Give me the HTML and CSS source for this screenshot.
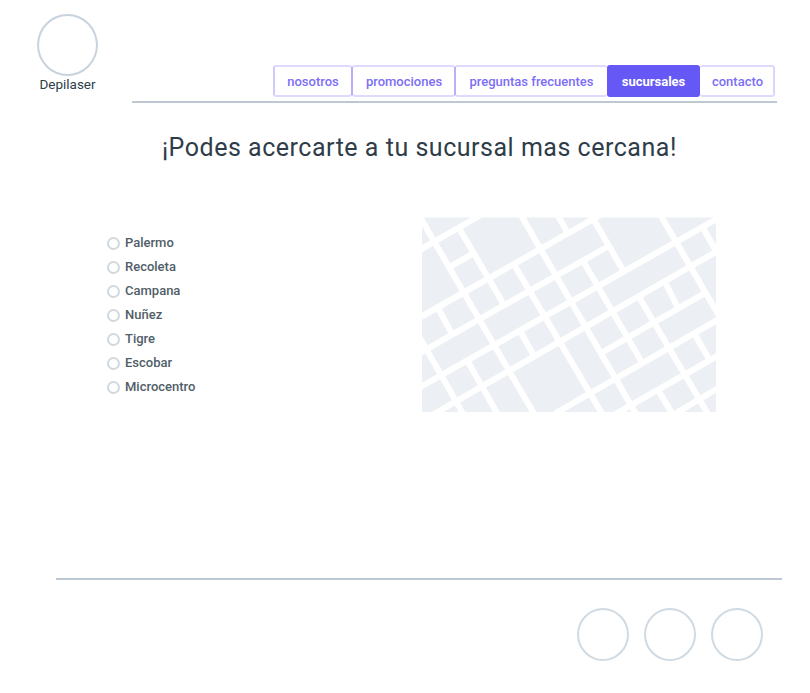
FILE: index.html
```html
<!DOCTYPE html>
<html lang="es">
<head>
<meta charset="utf-8">
<title>Depilaser</title>
<link rel="stylesheet" href="styles.css">
</head>
<body>
<header class="header">
  <div class="brand">
    <div class="logo"></div>
    <span class="brand-name">Depilaser</span>
  </div>
  <nav class="nav">
    <a class="tab nosotros"><span>nosotros</span></a>
    <a class="tab promociones"><span>promociones</span></a>
    <a class="tab preguntas"><span>preguntas frecuentes</span></a>
    <a class="tab active"><span>sucursales</span></a>
    <a class="tab contacto"><span>contacto</span></a>
  </nav>
</header>
<main class="main">
  <h1 class="title">¡Podes acercarte a tu sucursal mas cercana!</h1>
  <div class="content">
    <ul class="branches">
      <li class="branch"><i class="radio"></i><span>Palermo</span></li>
      <li class="branch"><i class="radio"></i><span>Recoleta</span></li>
      <li class="branch"><i class="radio"></i><span>Campana</span></li>
      <li class="branch"><i class="radio"></i><span>Nuñez</span></li>
      <li class="branch"><i class="radio"></i><span>Tigre</span></li>
      <li class="branch"><i class="radio"></i><span>Escobar</span></li>
      <li class="branch"><i class="radio"></i><span>Microcentro</span></li>
    </ul>
    <svg class="map" viewBox="422 217 294 195" width="294" height="195">
      <rect x="422" y="217.5" width="294" height="194.500" fill="#ecf0f5"/>
      <g stroke="#fff" stroke-width="6" fill="none">
        <path d="M419 250.500 480 215.500M419 318 602 214M419 353.400 607 247M419 387.800 718 218.200M434 414 720 249.500M704 293.700 602 352.500M720 318.500 555 413.500M720 354.500 612 416M720 387 672 415.500M449 267.300 474 253"/>
        <path d="M418.800 215 535 415.500M459 228 504 305M520.800 215 636.700 415M514 264.500 602.800 415M437 306 452 334M420 338 463.700 415M467 360 498 415M519.500 330 534 356M591 215 623.500 271M660.500 215 720 317.500M702 226 716 251M582.500 260 642 362.500M639 297 708.500 415M665 282 677.500 307M694 333 709 359M657.500 389 673 415M557.500 215 567.500 232.500"/>
      </g>
    </svg>
  </div>
</main>
<footer class="footer">
  <div class="social"></div>
  <div class="social"></div>
  <div class="social"></div>
</footer>
</body>
</html>
```
FILE: styles.css
```css
* { box-sizing: border-box; }
body {
  margin: 0;
  width: 810px;
  height: 693px;
  background: #fff;
  color: #2e3d49;
  font-family: Roboto, "Liberation Sans", sans-serif;
  font-size: 13px;
}
.header { display: flex; height: 103px; }
.brand {
  width: 61px;
  margin: 14px 34px 0 37px;
  display: flex;
  flex-direction: column;
  align-items: center;
}
.logo {
  width: 61px;
  height: 62px;
  flex: none;
  border: 2px solid #c8d3dd;
  border-radius: 50%;
}
.brand-name { line-height: 16px; font-size: 13.5px; white-space: nowrap; }
.nav {
  width: 645px;
  height: 103px;
  padding: 65px 2px 5px 141px;
  border-bottom: 2px solid #bdc8d2;
  display: flex;
}
.tab {
  height: 32px;
  display: flex;
  align-items: center;
  justify-content: center;
  border: 2px solid #dedafd;
  border-left: 1px solid #b8b1f9;
  border-right: 1px solid #b8b1f9;
  border-radius: 3px;
  color: #7c6ef5;
  font-weight: 500;
  white-space: nowrap;
}
.nosotros { width: 79px; border-left: 2px solid #d0cbfc; }
.promociones { width: 103px; padding-left: 1px; }
.preguntas { width: 152px; border-right-width: 0; }
.active { width: 93px; background: #6658f5; border-color: #6658f5; color: #fff; font-weight: 700; }
.contacto { width: 75px; border-left-width: 0; border-right: 2px solid #d9d5fc; padding-left: 2px; }
.title {
  margin: 28px 0 0 162px;
  font-size: 25px;
  line-height: 34px;
  font-weight: 400;
  letter-spacing: 0.52px;
  white-space: nowrap;
}
.content {
  display: flex;
  justify-content: space-between;
  margin: 52px 94px 0 107px;
}
.branches { margin: 14px 0 0; padding: 0; list-style: none; }
.branch {
  height: 24px;
  display: flex;
  align-items: center;
  gap: 5px;
  line-height: 15px;
  font-weight: 500;
  color: #505e69;
}
.branch span { padding-bottom: 2px; }
.radio { width: 13px; height: 13px; border: 2px solid #d1d8e0; border-radius: 50%; }
.map { display: block; }
.footer {
  margin: 166px 28px 0 56px;
  border-top: 2px solid #bdc8d2;
  padding: 28px 19px 0 0;
  display: flex;
  justify-content: flex-end;
  gap: 15px;
}
.social { width: 52px; height: 53px; border: 2px solid #d0dae3; border-radius: 50%; }
```
